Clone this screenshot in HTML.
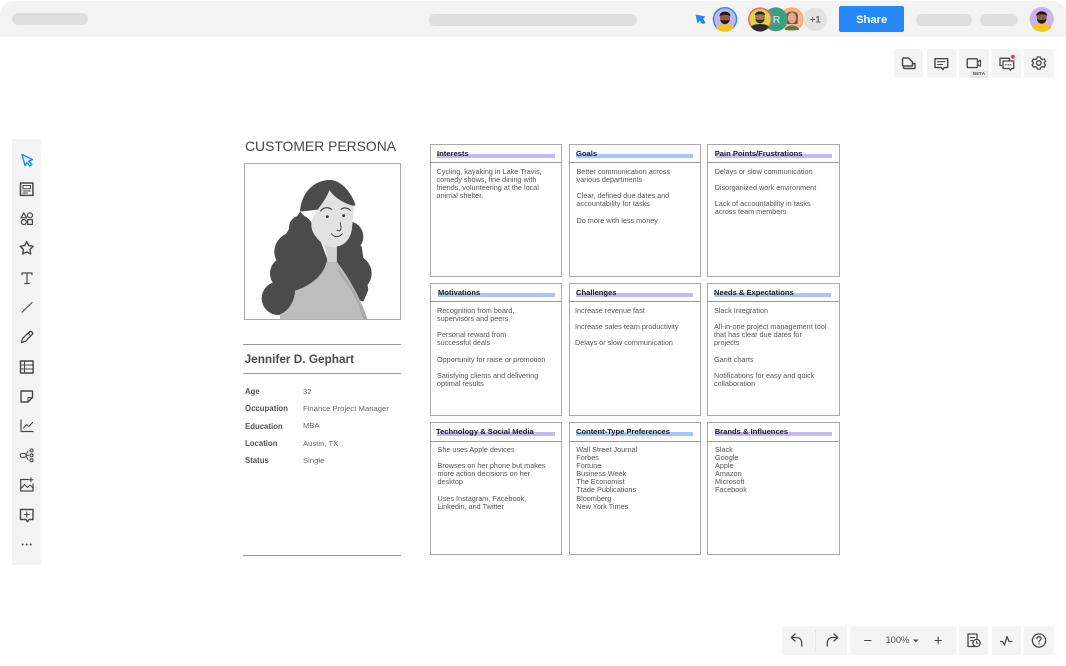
<!DOCTYPE html>
<html><head><meta charset="utf-8"><style>
html{background:#fff}
html,body{margin:0;padding:0;width:1066px;height:666px;overflow:hidden}
body{position:relative;font-family:"Liberation Sans",sans-serif;background:#fff;filter:blur(.3px)}
.a{position:absolute}
.p{position:absolute;background:#dedede;border-radius:7px}
.b{position:absolute;background:#f4f4f4;border-radius:2px}
.card{position:absolute;width:130px;height:131px;border:1px solid #a9a9a9;background:#fff}
.hl{position:absolute;height:3.8px}
.pu{background:#c6b7f6}.bl{background:#a5c6f6}
.h{position:absolute;font:bold 7.6px/10px "Liberation Sans",sans-serif;color:#1c1c1c;white-space:nowrap}
.t{position:absolute;font:7.25px/8.1px "Liberation Sans",sans-serif;color:#555;white-space:nowrap}
.ln{position:absolute;height:1px;background:#9a9a9a}
.k{position:absolute;left:245px;font:bold 7.8px/10px "Liberation Sans",sans-serif;color:#555}
.v{position:absolute;left:303px;font:7.7px/10px "Liberation Sans",sans-serif;color:#6a6a6a;white-space:nowrap}
svg{position:absolute;overflow:visible}
.ic{fill:none;stroke:#484848;stroke-width:1.3;stroke-linecap:round;stroke-linejoin:round}
</style></head><body>

<div class="a" style="left:0;top:1px;width:1066px;height:35.6px;background:#f3f3f3;border-radius:14px 14px 0 0"></div>
<div class="p" style="left:11.6px;top:13px;width:76.4px;height:12.4px"></div>
<div class="p" style="left:429px;top:14px;width:207.5px;height:11.5px"></div>
<div class="p" style="left:916px;top:13.7px;width:55.7px;height:12px"></div>
<div class="p" style="left:980px;top:13.7px;width:38px;height:12px"></div>
<div class="a" style="left:839px;top:6px;width:65.3px;height:26px;background:#2488fb;border-radius:2px;color:#fff;font:bold 11.2px/26px 'Liberation Sans',sans-serif;text-align:center"><span style="position:relative;top:0.5px">Share</span></div>

<svg style="left:0;top:0" width="1066" height="40" viewBox="0 0 1066 40">
<path d="M695.5 14.5L705.5 16.5L703.3 18.6L705.6 23.3L702 24L699.8 20.8L697.5 23.5Z" fill="#2488fb"/>
<circle cx="725" cy="19.3" r="11.6" fill="#c7b4ec" stroke="#2488fb" stroke-width="1.4"/>
<path d="M716 27C718 23.5 732 23.5 734 27A11 11 0 0 1 716 27Z" fill="#f7c51c"/>
<ellipse cx="725" cy="18" rx="5" ry="6.4" fill="#8f5d41"/><path d="M719.6 16.5C719 10 731 10 730.4 16.5C728 14.3 722 14.3 719.6 16.5Z" fill="#231c1a"/><path d="M720.2 19.5C721 25.5 729 25.5 729.8 19.5C728 20.8 722 20.8 720.2 19.5Z" fill="#231c1a"/>

<circle cx="791.7" cy="19.3" r="11.2" fill="#f0b5a8" stroke="#f4b04c" stroke-width="1.4"/>
<path d="M786 16C786 10 798 10 798 16L797.5 24L786 24Z" fill="#8a4f33"/>
<ellipse cx="792" cy="18" rx="4.2" ry="5.5" fill="#e6a88a"/><path d="M785 30C785 24 799 24 799 30Z" fill="#4b7d5d"/>
<circle cx="775.7" cy="19.3" r="12" fill="#3d9e85"/>
<text x="776.5" y="23" text-anchor="middle" font-family="Liberation Sans" font-size="10.5" fill="#e8f5f1">R</text>
<circle cx="760" cy="19.3" r="11.2" fill="#dcd24e" stroke="#f0646e" stroke-width="1.5"/>
<path d="M751 27C753 23 767 23 769 27A11 11 0 0 1 751 27Z" fill="#2d2d2d"/>
<ellipse cx="760" cy="17.5" rx="4.8" ry="6" fill="#a87152"/><path d="M754.9 15.5C754.6 10 765.4 10 765.1 15.5C763 13.8 757 13.8 754.9 15.5Z" fill="#2b2220"/><path d="M755.4 19C756 24.5 764 24.5 764.6 19C762 20.3 758 20.3 755.4 19Z" fill="#3a2a22"/>
<circle cx="815.3" cy="19.3" r="11.7" fill="#e2e2e2"/>
<text x="815.3" y="22.6" text-anchor="middle" font-family="Liberation Sans" font-size="9.5" font-weight="bold" fill="#666">+1</text>

<circle cx="1041.7" cy="19" r="12" fill="#c7b4ec"/>
<path d="M1032 27C1034 23 1049 23 1051.5 27A12 12 0 0 1 1032 27Z" fill="#f7c51c"/>
<ellipse cx="1041.7" cy="17.5" rx="5" ry="6.4" fill="#8f5d41"/><path d="M1036.3 16C1035.7 9.8 1047.7 9.8 1047.1 16C1045 13.8 1039 13.8 1036.3 16Z" fill="#231c1a"/><path d="M1036.9 19C1037.7 25 1045.7 25 1046.5 19C1044.7 20.3 1038.7 20.3 1036.9 19Z" fill="#231c1a"/>
</svg>

<!-- top-right tool buttons -->
<div class="b" style="left:894px;top:48.7px;width:29.3px;height:29px"></div>
<div class="b" style="left:926.7px;top:48.7px;width:29.3px;height:29px"></div>
<div class="b" style="left:959px;top:48.7px;width:29.7px;height:29px"></div>
<div class="b" style="left:991.7px;top:48.7px;width:29.3px;height:29px"></div>
<div class="b" style="left:1024px;top:48.7px;width:29.7px;height:29px"></div>
<div class="a" style="left:970px;top:71px;width:18px;height:6.5px;background:#e9e9e9;color:#555;font:bold 4.6px/6.5px 'Liberation Sans',sans-serif;text-align:center">BETA</div>
<svg style="left:0;top:0" width="1066" height="90" viewBox="0 0 1066 90" class="ic">
<path d="M902.5 59.5C902.5 58.6 903 58 904 58H908.5L912.5 62V66H904C903 66 902.5 65.5 902.5 64.5Z" stroke-width="1.5"/><path d="M912.8 63.5H915V68.5H905C904 68.5 903.5 68 903.5 67" stroke-width="1.4"/>
<path d="M935 58.7H947.7V67.5H944.2L943 69.7L941.2 67.5H935Z" stroke-width="1.4"/><path d="M937.5 61.7H945M937.5 64.5H942.5" stroke-width="1.1"/>
<rect x="967.2" y="58.8" width="10.3" height="8.8" rx="1" stroke-width="1.4"/><path d="M977.5 62L980.5 60.2V66.2L977.5 64.5" stroke-width="1.2"/>
<path d="M1001.5 65.5H1000V58.3H1009.5V60.5" stroke-width="1.3"/><path d="M1003 61H1013.7V68.5H1011.5L1010.6 70.2L1009 68.5H1003Z" stroke-width="1.3"/><path d="M1006 64.8H1006.2M1008.3 64.8H1008.5M1010.6 64.8H1010.8"/>
<circle cx="1012.9" cy="56.7" r="2" fill="#f8404a" stroke="none"/>
<circle cx="1038.8" cy="63" r="2.3" stroke-width="1.4"/>
<path d="M1037.3 57H1040.3L1040.8 58.7L1042.5 59.5L1044.2 58.9L1045.6 61.4L1044.3 62.5V63.6L1045.6 64.8L1044.2 67.2L1042.5 66.6L1040.8 67.4L1040.3 69.1H1037.3L1036.8 67.4L1035.1 66.6L1033.4 67.2L1032 64.8L1033.3 63.6V62.5L1032 61.4L1033.4 58.9L1035.1 59.5L1036.8 58.7Z" stroke-width="1.3"/>
</svg>

<!-- left toolbar -->
<div class="a" style="left:12px;top:139px;width:28.7px;height:426px;background:#f3f3f3"></div>
<svg style="left:0;top:130px" width="60" height="440" viewBox="0 130 60 440" class="ic">
<path d="M22 154.5L32.5 159.5L28.7 161.3L31.8 164.5L29.8 166L27 162.8L25 165.5Z" stroke="#2488fb" stroke-width="1.4"/>
<rect x="20.5" y="183" width="12.4" height="12.4" stroke-width="1.5"/><rect x="23" y="185.5" width="7.5" height="3.2" stroke-width="1"/><path d="M23 191H30.5M23 193H27.5" stroke-width="1"/>
<path d="M23.8 212.8L26.6 217.8H21Z" stroke-width="1.2"/><circle cx="30" cy="215.3" r="2.5" stroke-width="1.2"/><circle cx="23.8" cy="222" r="2.5" stroke-width="1.2"/><rect x="27.6" y="219.6" width="4.8" height="4.8" stroke-width="1.2"/>
<path d="M26.7 241.5L28.7 245.6L33.2 246.3L30 249.5L30.7 254L26.7 251.9L22.7 254L23.4 249.5L20.2 246.3L24.7 245.6Z" stroke-width="1.4"/>
<path d="M22 274.8V273H32V274.8M27 273V283.5M24.8 283.5H29.2" stroke-width="1.2"/>
<path d="M22.3 312L32 302.5" stroke-width="1.1"/>
<path d="M21.5 342.5L22.5 338.5L30 331.5C31 330.5 33.5 333 32.5 334L25.5 341.3Z"/><path d="M28.3 333.2L30.8 335.8" stroke-width="1"/>
<rect x="20.5" y="361" width="12.6" height="12" stroke-width="1.4"/><path d="M20.5 365H33M20.5 369H33M24.5 361V373" stroke-width="1.1"/>
<path d="M21 391H32.5V397.5L28 402H21Z" stroke-width="1.4"/><path d="M32.5 397.5H28V402" stroke-width="1"/>
<path d="M21 420V431.5H33" stroke-width="1.2"/><path d="M23.5 428L26.5 424.5L28.8 426.5L32.5 422.5" stroke-width="1.1"/>
<rect x="20.2" y="453.5" width="6" height="3.8" rx="1.9" stroke-width="1.1"/><path d="M26.2 455.4H28.5M28 451.3L26.5 454M28 459.5L26.5 456.8" stroke-width="1"/><circle cx="31.5" cy="450.5" r="1.5" stroke-width="1.1"/><circle cx="31.5" cy="455.4" r="1.5" stroke-width="1.1"/><circle cx="31.5" cy="460.3" r="1.5" stroke-width="1.1"/>
<path d="M28 479.5H20.7V491H33V484" stroke-width="1.2"/><path d="M21 488.5L24.5 484.5L27.5 487.5L30 485L33 488" stroke-width="1.1"/><path d="M31 477.5V482M28.8 479.8H33.2" stroke-width="1"/>
<path d="M20.5 509.5H33V519.5H29L27.5 521.7L26 519.5H20.5Z" stroke-width="1.4"/><path d="M26.7 512V517M24.2 514.5H29.2" stroke-width="1.1"/>
<circle cx="22.7" cy="544.5" r="1" fill="#484848" stroke="none"/><circle cx="26.7" cy="544.5" r="1" fill="#484848" stroke="none"/><circle cx="30.7" cy="544.5" r="1" fill="#484848" stroke="none"/>
</svg>

<!-- persona -->
<div class="a" style="left:245px;top:138px;font:13.9px/17px 'Liberation Sans',sans-serif;color:#474747;white-space:nowrap">CUSTOMER PERSONA</div>
<div class="a" style="left:243.5px;top:163px;width:155px;height:155px;border:1px solid #a9a9a9;background:#fff"></div>
<svg style="left:235px;top:130px" width="175" height="200" viewBox="0 0 525 600">
<g fill="#4b4b4b">
<path d="M285 150C235 150 198 190 195 245L362 226C350 190 320 150 285 150Z"/>
<circle cx="197" cy="292" r="35"/><circle cx="176" cy="365" r="58"/><circle cx="155" cy="430" r="50"/><circle cx="130" cy="505" r="50"/>
<path d="M195 245L240 290L280 395L270 440L180 500L135 552L120 480L135 340Z"/>
<circle cx="338" cy="320" r="47"/><circle cx="355" cy="430" r="55"/>
<path d="M305 290L380 350L400 480L385 515L340 500L305 420Z"/>
</g>
<path fill="#bdbdbd" d="M135 568V552C150 550 178 525 180 482C205 475 262 450 275 395H305C340 440 380 510 397 568Z"/>
<path fill="#a9a9a9" d="M305 410C340 450 380 515 397 568H385C370 515 345 470 318 438Z"/>
<path fill="#e2e2e2" d="M283 180C270 220 235 245 230 275C225 300 240 322 262 340C272 355 276 375 277 395H305V350C335 345 350 320 352 285L358 228C330 222 300 205 283 180Z"/>
<path fill="#d2d2d2" d="M277 395H305V352C293 352 282 350 268 345C274 360 276 378 277 395Z"/>
<path fill="none" stroke="#333" stroke-width="3" stroke-linecap="round" d="M257 243C265 232 280 230 290 238M318 238C325 232 338 232 346 241"/>
<circle cx="277" cy="260" r="4.2" fill="#333"/><circle cx="326" cy="257" r="4.2" fill="#333"/>
<path fill="none" stroke="#333" stroke-width="2.6" stroke-linecap="round" d="M316 278C318 288 320 298 314 303L306 301M289 311C297 323 313 322 322 311"/>
</svg>
<div class="ln" style="left:243px;top:344px;width:158px"></div>
<div class="ln" style="left:243px;top:373px;width:158px"></div>
<div class="ln" style="left:243px;top:555px;width:158px"></div>
<div class="a" style="left:244.6px;top:352px;font:bold 11.8px/14px 'Liberation Sans',sans-serif;color:#4a4a4a;white-space:nowrap">Jennifer D. Gephart</div>
<div class="k" style="top:387px">Age</div><div class="v" style="top:386.5px">32</div>
<div class="k" style="top:404px">Occupation</div><div class="v" style="top:404px">Finance Project Manager</div>
<div class="k" style="top:421.5px">Education</div><div class="v" style="top:421px">MBA</div>
<div class="k" style="top:439px">Location</div><div class="v" style="top:438.5px">Austin, TX</div>
<div class="k" style="top:456px">Status</div><div class="v" style="top:455.5px">Single</div>

<!-- cards -->
<div class="card" style="left:430px;top:144px"></div><div class="ln" style="left:430px;top:162px;width:131px"></div>
<div class="card" style="left:568.5px;top:144px"></div><div class="ln" style="left:569px;top:162px;width:131px"></div>
<div class="card" style="left:707px;top:144px;width:131px"></div><div class="ln" style="left:707px;top:162px;width:132px"></div>
<div class="card" style="left:430px;top:283px"></div><div class="ln" style="left:430px;top:301px;width:131px"></div>
<div class="card" style="left:568.5px;top:283px"></div><div class="ln" style="left:569px;top:301px;width:131px"></div>
<div class="card" style="left:707px;top:283px;width:131px"></div><div class="ln" style="left:707px;top:301px;width:132px"></div>
<div class="card" style="left:430px;top:422px"></div><div class="ln" style="left:430px;top:441px;width:131px"></div>
<div class="card" style="left:568.5px;top:422px"></div><div class="ln" style="left:569px;top:441px;width:131px"></div>
<div class="card" style="left:707px;top:422px;width:131px"></div><div class="ln" style="left:707px;top:441px;width:132px"></div>

<div class="hl pu" style="left:437px;top:154.3px;width:117.7px"></div>
<div class="hl bl" style="left:575.7px;top:154.3px;width:117px"></div>
<div class="hl pu" style="left:715.7px;top:154.3px;width:116.6px"></div>
<div class="hl bl" style="left:438.3px;top:293px;width:116.4px"></div>
<div class="hl pu" style="left:575.7px;top:293px;width:117.3px"></div>
<div class="hl bl" style="left:714px;top:293px;width:117px"></div>
<div class="hl pu" style="left:437px;top:432.3px;width:117.7px"></div>
<div class="hl bl" style="left:575.7px;top:432.3px;width:117.3px"></div>
<div class="hl pu" style="left:715px;top:432.3px;width:116.7px"></div>

<div class="h" style="left:437px;top:149px">Interests</div>
<div class="h" style="left:576px;top:149px">Goals</div>
<div class="h" style="left:714.7px;top:149px">Pain Points/Frustrations</div>
<div class="h" style="left:438px;top:287.5px">Motivations</div>
<div class="h" style="left:576px;top:288px">Challenges</div>
<div class="h" style="left:714px;top:287.5px">Needs &amp; Expectations</div>
<div class="h" style="left:436px;top:426.5px">Technology &amp; Social Media</div>
<div class="h" style="left:576px;top:426.5px">Content-Type Preferences</div>
<div class="h" style="left:714.7px;top:426.5px">Brands &amp; Influences</div>

<div class="t" style="left:436.5px;top:168px">Cycling, kayaking in Lake Travis,<br>comedy shows, fine dining with<br>friends, volunteering at the local<br>animal shelter.</div>
<div class="t" style="left:576.5px;top:168px">Better communication across<br>various departments<br><br>Clear, defined due dates and<br>accountability for tasks<br><br>Do more with less money</div>
<div class="t" style="left:714.7px;top:168px">Delays or slow communication<br><br>Disorganized work environment<br><br>Lack of accountability in tasks<br>across team members</div>
<div class="t" style="left:437px;top:307px">Recognition from board,<br>supervisors and peers<br><br>Personal reward from<br>successful deals<br><br>Opportunity for raise or promotion<br><br>Satisfying clients and delivering<br>optimal results</div>
<div class="t" style="left:575px;top:307px">Increase revenue fast<br><br>Increase sales team productivity<br><br>Delays or slow communication</div>
<div class="t" style="left:714px;top:307px">Slack Integration<br><br>All-in-one project management tool<br>that has clear due dates for<br>projects<br><br>Gantt charts<br><br>Notifications for easy and quick<br>collaboration</div>
<div class="t" style="left:437.5px;top:446px">She uses Apple devices<br><br>Browses on her phone but makes<br>more action decisions on her<br>desktop<br><br>Uses Instagram, Facebook,<br>Linkedin, and Twitter</div>
<div class="t" style="left:576.3px;top:446px">Wall Street Journal<br>Forbes<br>Fortune<br>Business Week<br>The Economist<br>Trade Publications<br>Bloomberg<br>New York Times</div>
<div class="t" style="left:715px;top:446px">Slack<br>Google<br>Apple<br>Amazon<br>Microsoft<br>Facebook</div>

<!-- bottom bar -->
<div class="b" style="left:781.7px;top:626px;width:65.3px;height:29px"></div>
<div class="b" style="left:850px;top:626px;width:106px;height:29px"></div>
<div class="b" style="left:959px;top:626px;width:29.3px;height:29px"></div>
<div class="b" style="left:991.7px;top:626px;width:29.3px;height:29px"></div>
<div class="b" style="left:1024px;top:626px;width:29.7px;height:29px"></div>
<div class="a" style="left:814.5px;top:630px;width:1px;height:21px;background:#e5e5e5"></div>
<div class="a" style="left:885.5px;top:635px;font:9.3px/11px 'Liberation Sans',sans-serif;color:#4a4a4a">100%</div>
<svg style="left:760px;top:615px" width="306" height="51" viewBox="760 615 306 51" class="ic">
<path d="M801.7 646V643C801.7 639.5 799.5 637.5 796 637.5H791.5M795 634L791.3 637.5L795 641"/>
<path d="M827.3 646V643C827.3 639.5 829.5 637.5 833 637.5H837.5M834 634L837.7 637.5L834 641"/>
<path d="M864.5 640.5H871" stroke-width="1.1"/>
<path d="M935 640.5H941.5M938.2 637.2V643.8" stroke-width="1.1"/>
<path d="M913 639.5H918.5L915.7 642.5Z" fill="#484848" stroke="none"/>
<path d="M975 646.5H968V634H977V638.5"/><path d="M970.5 637.5H974.5M970.5 640.5H972.5" stroke-width="1"/><circle cx="976.5" cy="643" r="3.6"/><path d="M976.5 641.3V643.2H978" stroke-width="1"/>
<path d="M1000.5 641.5H1002.5L1004.5 645L1007 636.5L1009 641.5H1012"/>
<circle cx="1039" cy="640.5" r="6.6"/><path d="M1036.9 638.6C1037.1 636.2 1041 636.2 1041.1 638.6C1041.1 640.2 1039 640.2 1039 641.9"/><path d="M1039 643.7V644"/>
</svg>
</body></html>
